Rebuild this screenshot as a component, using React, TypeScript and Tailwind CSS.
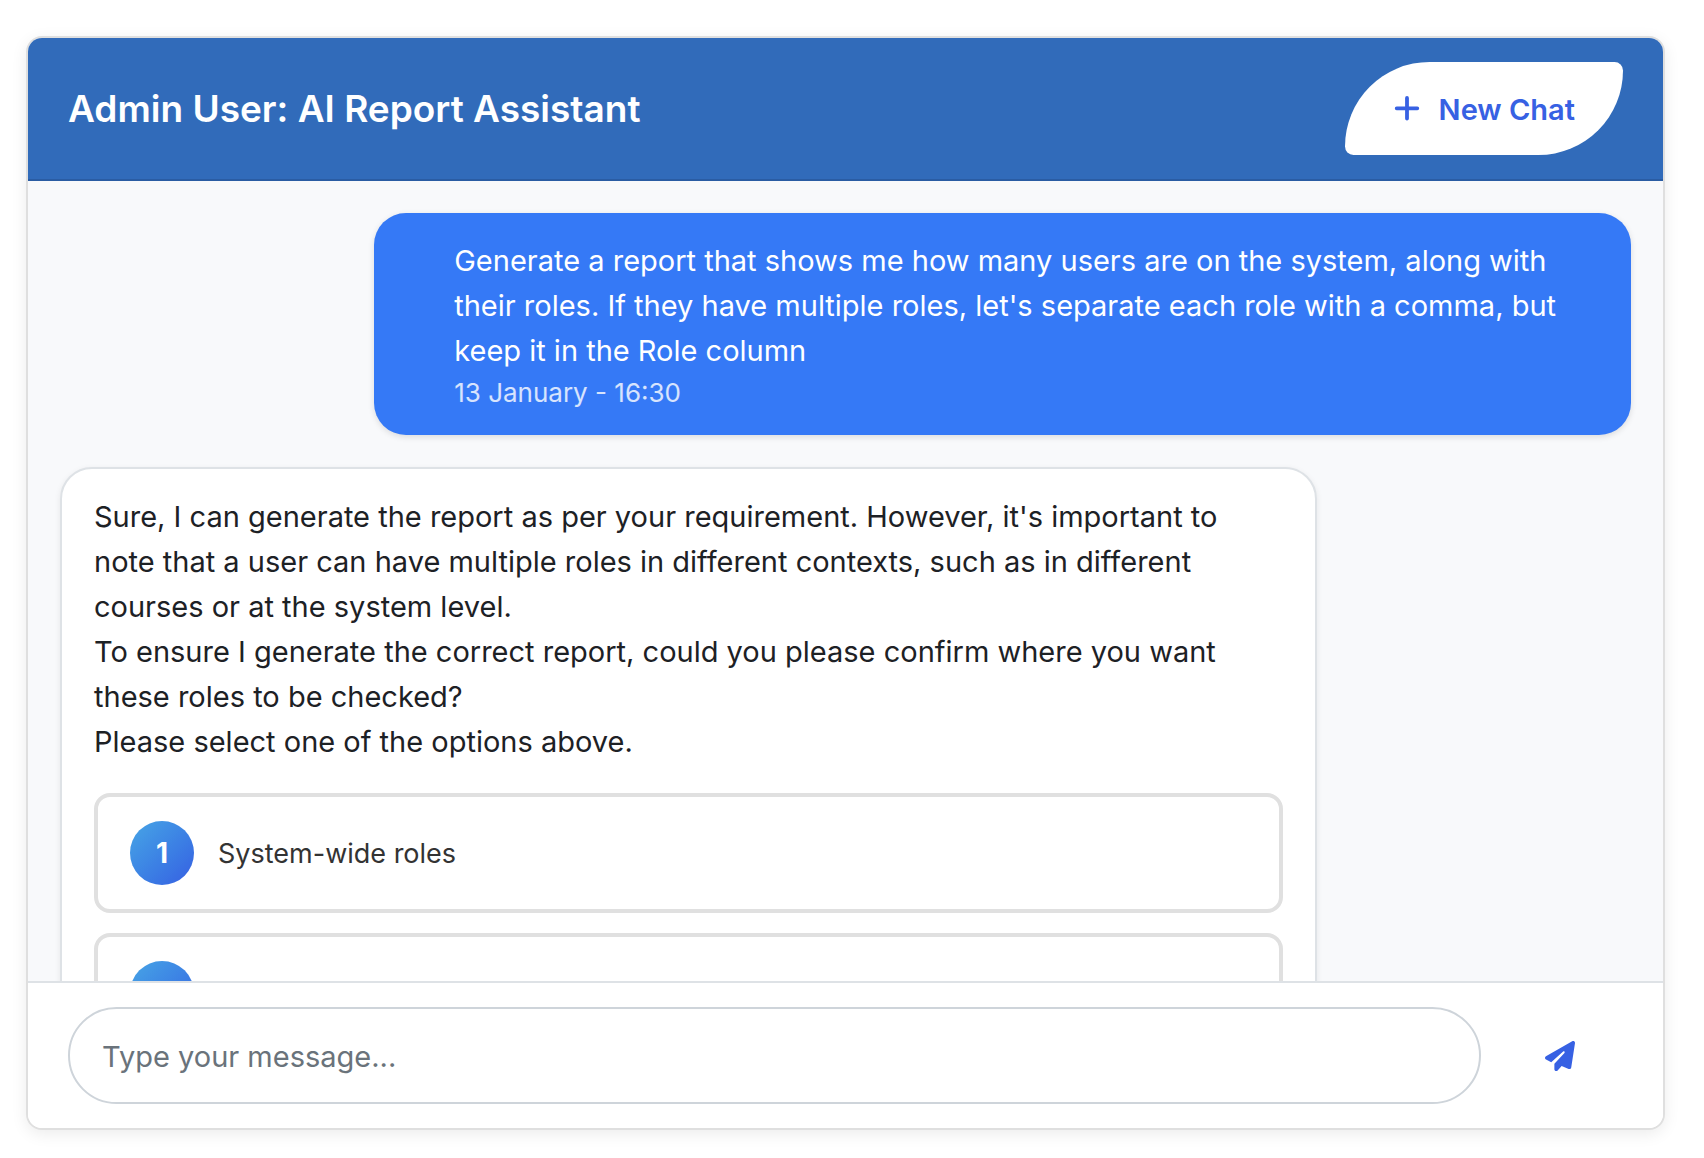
import React, { useState } from "react";

const options = [
  { id: 1, label: "System-wide roles" },
  { id: 2, label: "" },
];

function PlusIcon() {
  return (
    <svg
      viewBox="0 0 28 32"
      className="h-8 w-7"
      fill="none"
      stroke="currentColor"
      strokeWidth="3.800"
      strokeLinecap="round"
      aria-hidden="true"
    >
      <path d="M14 4v20.600M3.700 14.300h20.600" />
    </svg>
  );
}

function PlaneIcon() {
  return (
    <svg viewBox="0 0 512 512" className="size-[30px]" fill="currentColor" aria-hidden="true">
      <path d="M498.100 5.600c10.100 7 15.400 19.100 13.500 31.200l-64 416c-1.500 9.700-7.400 18.200-16 23s-18.900 5.400-28 1.600L284 427.700l-68.500 74.100c-8.900 9.700-22.900 12.900-35.200 8.100S160 493.200 160 480V396.400c0-4 1.500-7.800 4.200-10.700L331.800 202.800c5.800-6.300 5.600-16-.4-22s-15.700-6.400-22-.7L106 360.800 17.700 316.600C7.100 311.300 .3 300.700 0 288.900s5.900-22.800 16.100-28.700l448-256c10.700-6.100 23.900-5.500 34 1.400z" />
    </svg>
  );
}

export default function App() {
  const [message, setMessage] = useState("");
  return (
    <div className="flex h-screen flex-col bg-white pt-9 pr-[39px] pb-7 pl-[26px] font-['Inter',sans-serif]">
      <main className="flex min-h-0 flex-1 flex-col overflow-hidden rounded-2xl border-2 border-[#dfdfdf] bg-white shadow-[0_4px_16px_rgba(0,0,0,0.08)]">
        <header className="flex items-center justify-between border-b-2 border-[#2a5ca3] bg-[#316bba] px-10 py-6">
          <h1 className="text-[37px] leading-[45px] font-semibold text-white">Admin User: AI Report Assistant</h1>
          <button
            type="button"
            className="flex items-center gap-[18px] rounded-tl-[100px] rounded-tr-[10px] rounded-br-[100px] rounded-bl-[10px] bg-white px-12 pt-[25px] pb-[23px] text-[29px] leading-[45px] font-semibold text-[#3761e3]"
          >
            <PlusIcon />
            New Chat
          </button>
        </header>

        <section className="flex min-h-0 flex-1 flex-col gap-8 overflow-y-auto bg-[#f8f9fb] p-8 text-[29px] leading-[45px] [scrollbar-width:none]">
          <article className="w-4/5 shrink-0 self-end rounded-[32px] bg-[#3579f6] pt-[25px] pr-16 pb-[23px] pl-20 text-white shadow-[0_2px_6px_rgba(0,0,0,0.12)]">
            <p>
              Generate a report that shows me how many users are on the system, along with their roles. If they have
              multiple roles, let's separate each role with a comma, but keep it in the Role column
            </p>
            <time className="block text-[26px] leading-[39px] text-white/80">13 January - 16:30</time>
          </article>

          <article className="w-4/5 shrink-0 rounded-[32px] border-2 border-[#dee2e6] bg-white px-8 pt-[25px] pb-[23px] text-[#1d2125] shadow-[0_2px_6px_rgba(0,0,0,0.08)]">
            <p>
              Sure, I can generate the report as per your requirement. However, it's important to note that a user can
              have multiple roles in different contexts, such as in different courses or at the system level.
            </p>
            <p>To ensure I generate the correct report, could you please confirm where you want these roles to be checked?</p>
            <p>Please select one of the options above.</p>
            <div className="mt-[29px] flex flex-col gap-5">
              {options.map((o) => (
                <button
                  key={o.id}
                  type="button"
                  className="flex items-center gap-6 rounded-2xl border-4 border-[#e0e0e0] bg-white px-8 py-6 text-left text-[27px] leading-[45px] text-[#333333]"
                >
                  <span className="flex size-16 items-center justify-center rounded-full bg-linear-135 from-[#48a5e5] to-[#375ee2] text-[28px] font-bold text-white">
                    {o.id}
                  </span>
                  {o.label}
                </button>
              ))}
            </div>
          </article>
        </section>

        <form className="flex items-center gap-4 border-t-2 border-[#dee2e6] bg-white px-10 py-6" onSubmit={(e) => e.preventDefault()}>
          <input
            type="text"
            aria-label="Message"
            placeholder="Type your message..."
            value={message}
            onChange={(e) => setMessage(e.target.value)}
            className="min-w-0 flex-1 rounded-full border-2 border-[#ced4da] bg-white px-8 pt-[25px] pb-[23px] text-[29px] leading-[45px] text-[#1d2125] outline-none placeholder:text-[#6a737b]"
          />
          <button type="submit" aria-label="Send message" className="px-12 py-6 text-[#3761e3]">
            <PlaneIcon />
          </button>
        </form>
      </main>
    </div>
  );
}
